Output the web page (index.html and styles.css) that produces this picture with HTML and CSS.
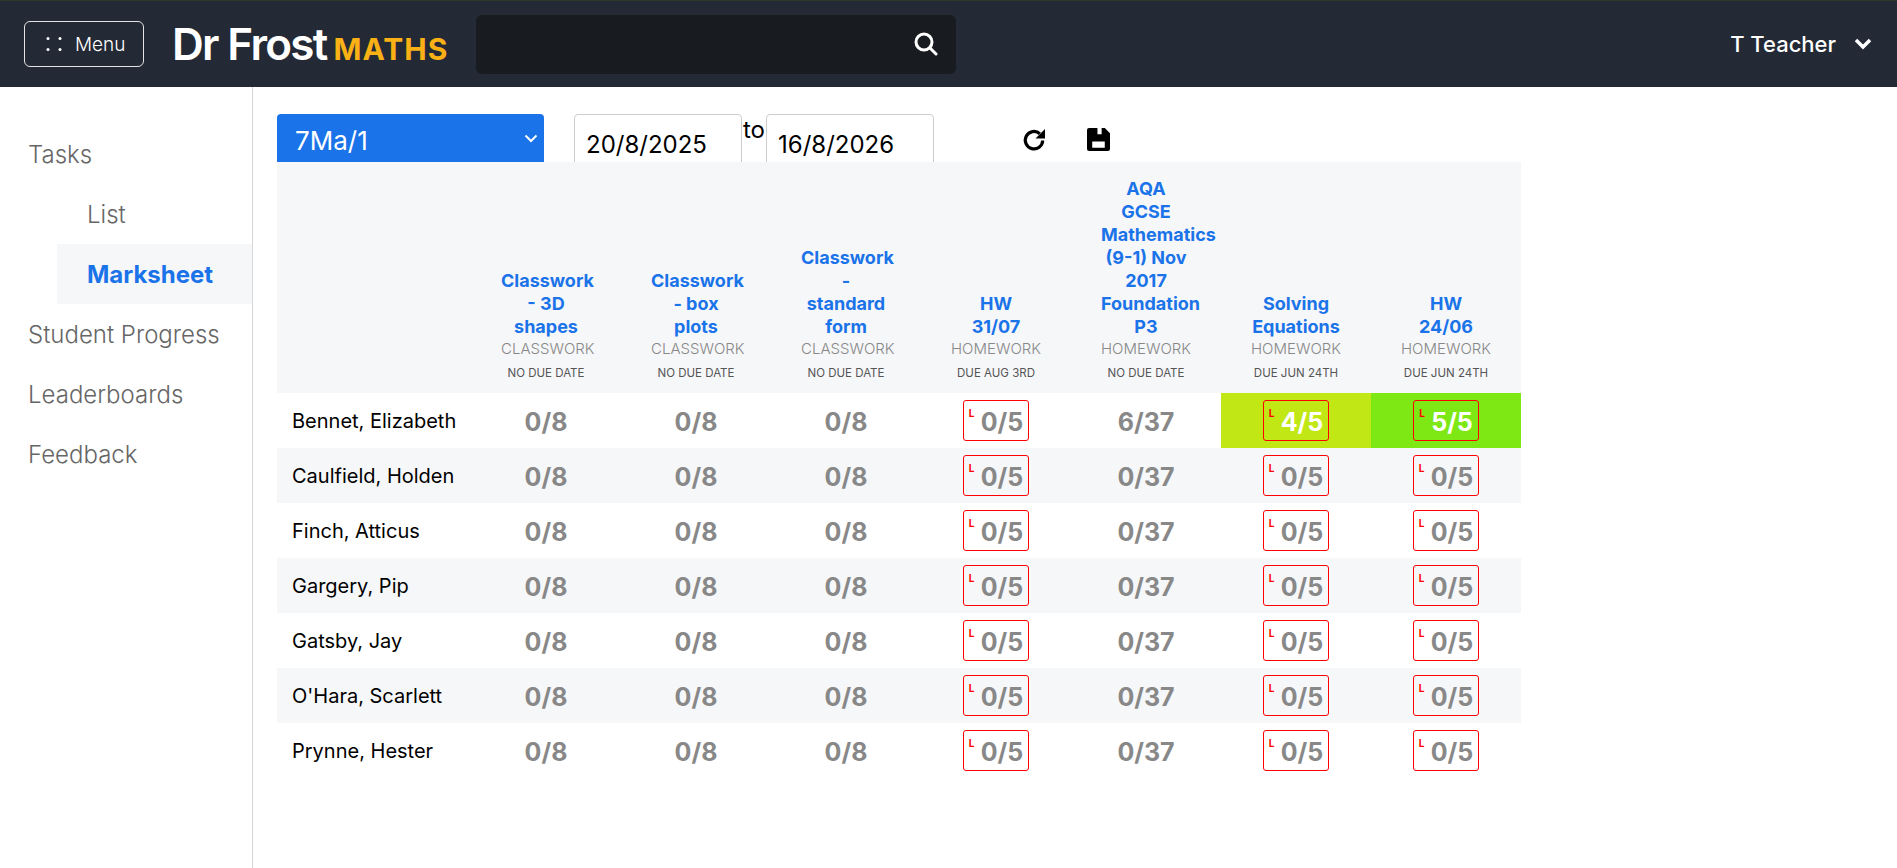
FILE: index.html
```html
<!DOCTYPE html>
<html>

<head>
	<title>Marksheet</title>
	<link rel="stylesheet" href="styles.css">
</head>

<body>
	<header class="topbar">
		<button class="menu-btn">
			<svg width="16" height="14" viewBox="0 0 16 14"><circle cx="2" cy="1.500" r="1.500" fill="#fff"/><circle cx="14" cy="1.500" r="1.500" fill="#fff"/><circle cx="2" cy="12.500" r="1.500" fill="#fff"/><circle cx="14" cy="12.500" r="1.500" fill="#fff"/></svg>
			<span>Menu</span>
		</button>
		<div class="logo"><span class="logo-name">Dr Frost</span><span class="logo-maths">MATHS</span></div>
		<div class="search">
			<svg width="24" height="24" viewBox="0 0 24 24" fill="none" stroke="#fff" stroke-width="3" stroke-linecap="round"><circle cx="10" cy="10" r="8"/><path d="M16 16l6 6"/></svg>
		</div>
		<div class="user">
			<span>T Teacher</span>
			<svg width="18" height="12" viewBox="0 0 18 12" fill="none" stroke="#fff" stroke-width="3.500"><path d="M2 2l7 7 7-7"/></svg>
		</div>
	</header>
	<div class="page">
		<nav class="side">
			<a class="side-item">Tasks</a>
			<a class="side-item sub">List</a>
			<a class="side-item sub active">Marksheet</a>
			<a class="side-item">Student Progress</a>
			<a class="side-item">Leaderboards</a>
			<a class="side-item">Feedback</a>
		</nav>
		<main class="content">
			<div class="filters">
				<div class="class-select">
					<span>7Ma/1</span>
					<svg width="14" height="9" viewBox="0 0 14 9" fill="none" stroke="#fff" stroke-width="2"><path d="M1.500 1.500L7 7l5.500-5.500"/></svg>
				</div>
				<div class="date-box">20/8/2025</div>
				<span class="to">to</span>
				<div class="date-box">16/8/2026</div>
				<svg class="tool refresh" width="24" height="24" viewBox="0 0 24 24" fill="none" stroke="#000" stroke-width="3.200"><path d="M20.700 12.500a8.700 8.700 0 1 1-2.900-6.800"/><path d="M23 1v9.500h-9.500z" fill="#000" stroke="none"/></svg>
				<svg class="tool save" width="23" height="23" viewBox="0 0 22 22"><path fill-rule="evenodd" d="M2 0h15l5 5v15a2 2 0 0 1-2 2H2a2 2 0 0 1-2-2V2a2 2 0 0 1 2-2zM10 0v6h4V0zM5 13v6h12v-6z"/></svg>
			</div>
			<table class="marks" id="marks"></table>
		</main>
	</div>
	<script>
		var tasks = [
			['Classwork<br>- 3D<br>shapes', 'Classwork', 'No due date', 8],
			['Classwork<br>- box<br>plots', 'Classwork', 'No due date', 8],
			['Classwork<br>-<br>standard<br>form', 'Classwork', 'No due date', 8],
			['HW<br>31/07', 'Homework', 'Due Aug 3rd', 5, true],
			['AQA<br>GCSE<br>Mathematics<br>(9-1) Nov<br>2017<br>Foundation<br>P3', 'Homework', 'No due date', 37],
			['Solving<br>Equations', 'Homework', 'Due Jun 24th', 5, true],
			['HW<br>24/06', 'Homework', 'Due Jun 24th', 5, true]
		]
		var students = ['Bennet, Elizabeth', 'Caulfield, Holden', 'Finch, Atticus', 'Gargery, Pip', 'Gatsby, Jay', "O'Hara, Scarlett", 'Prynne, Hester']
		var o = '<thead><tr><th></th>'
		tasks.forEach(function (t) {
			o += '<th><div class="head"><div class="task-name">' + t[0] + '</div><div class="task-type">' + t[1] + '</div><div class="task-due">' + t[2] + '</div></div></th>'
		})
		o += '</tr></thead><tbody>'
		students.forEach(function (s, r) {
			o += '<tr><td class="name">' + s + '</td>'
			tasks.forEach(function (t, c) {
				var got = 0
				var cls = ''
				if (r == 0 && c == 4) got = 6
				if (r == 0 && c == 5) { got = 4; cls = ' lime' }
				if (r == 0 && c == 6) { got = 5; cls = ' green' }
				var score = got + '/' + t[3]
				if (t[4]) score = '<span class="late"><i>L</i>' + score + '</span>'
				o += '<td class="score' + cls + '">' + score + '</td>'
			})
			o += '</tr>'
		})
		document.getElementById('marks').innerHTML = o + '</tbody>'
	</script>
</body>

</html>
```

FILE: styles.css
```css
html,
body {
	margin: 0;
	padding: 0;
	height: 100%;
}

body {
	display: flex;
	flex-direction: column;
	height: 868px;
	overflow: hidden;
	background: #fff;
	font-family: "Inter", "Noto Sans", sans-serif;
}

.topbar {
	display: flex;
	align-items: center;
	flex: 0 0 87px;
	box-sizing: border-box;
	padding: 0 25px 0 24px;
	background: #232a36;
	border-top: 1px solid #2c3a2a;
}

.menu-btn {
	display: flex;
	align-items: center;
	gap: 13px;
	box-sizing: border-box;
	width: 120px;
	height: 46px;
	padding: 0 0 0 21px;
	background: none;
	border: 1px solid #e4e4e4;
	border-radius: 6px;
	color: #fff;
	font-family: inherit;
	font-size: 19px;
	font-weight: 300;
}

.logo {
	display: flex;
	align-items: baseline;
	gap: 7px;
	margin-left: 28px;
	width: 304px;
}

.logo-name {
	color: #fff;
	font-size: 44px;
	font-weight: 600;
	letter-spacing: -1.700px;
}

.logo-maths {
	color: #f9b116;
	font-size: 30px;
	font-weight: 700;
	letter-spacing: 1px;
}

.search {
	display: flex;
	align-items: center;
	justify-content: flex-end;
	box-sizing: border-box;
	width: 480px;
	height: 59px;
	padding-right: 18px;
	background: #181b1f;
	border-radius: 6px;
}

.user {
	display: flex;
	align-items: center;
	gap: 18px;
	margin-left: auto;
	color: #fff;
	font-size: 22px;
	font-weight: 500;
}

.page {
	display: flex;
	flex: 1;
}

.side {
	box-sizing: border-box;
	width: 253px;
	padding-top: 37px;
	border-right: 1px solid #d6d6d6;
}

.side-item {
	display: block;
	height: 60px;
	padding-left: 28px;
	color: #666;
	font-size: 24px;
	font-weight: 300;
	line-height: 62px;
}

.side-item.sub {
	margin-left: 57px;
	padding-left: 30px;
}

.side-item.active {
	background: #f6f7f9;
	color: #1a73e8;
	font-weight: 700;
}

.content {
	padding: 27px 0 0 24px;
}

.filters {
	display: flex;
	height: 48px;
	overflow: hidden;
}

.class-select {
	display: flex;
	align-items: center;
	justify-content: space-between;
	box-sizing: border-box;
	width: 267px;
	height: 48px;
	padding: 5px 6px 0 18px;
	background: #1a73e8;
	border-radius: 4px 4px 0 0;
	color: #fff;
	font-size: 26px;
}

.class-select svg {
	margin-top: -5px;
}

.date-box {
	box-sizing: border-box;
	width: 168px;
	height: 60px;
	padding: 15px 0 0 11px;
	border: 1px solid #ccc;
	border-radius: 4px;
	font-size: 24px;
}

.class-select + .date-box {
	margin-left: 30px;
}

.to {
	width: 24px;
	padding-top: 1px;
	font-size: 24px;
	text-align: center;
}

.tool {
	margin-top: 14px;
}

.refresh {
	margin-left: 88px;
}

.save {
	margin-left: 41px;
}

.marks {
	border-collapse: collapse;
	table-layout: fixed;
	width: 1244px;
}

.marks th {
	width: 150px;
	padding: 0;
	background: #f6f7f9;
	vertical-align: bottom;
	font-weight: normal;
}

.marks th:first-child {
	width: 194px;
}

.head {
	width: 90px;
	margin: 0 auto;
	padding: 15px 0 12px;
}

.task-name {
	color: #1a73e8;
	font-size: 18px;
	font-weight: 700;
	line-height: 23px;
	white-space: nowrap;
}

.task-type {
	margin-top: 1px;
	color: #888;
	font-size: 15px;
	font-weight: 300;
	line-height: 20px;
	text-transform: uppercase;
}

.task-due {
	margin-top: 6px;
	color: #555;
	font-size: 11.500px;
	line-height: 16px;
	text-transform: uppercase;
	white-space: nowrap;
}

.marks tbody tr {
	height: 55px;
}

.marks tbody tr:nth-child(even) {
	background: #f6f7f9;
}

.name {
	padding-left: 15px;
	font-size: 20px;
}

.score {
	padding: 2px 0 0;
	color: #888;
	font-size: 25px;
	font-weight: 700;
	text-align: center;
}

.late {
	position: relative;
	display: inline-block;
	box-sizing: border-box;
	height: 41px;
	margin-top: -2px;
	padding: 0 5px 0 17px;
	border: 1px solid #f00;
	border-radius: 3px;
	line-height: 43px;
}

.late i {
	position: absolute;
	top: 7px;
	left: 5px;
	color: #f00;
	font-size: 10px;
	font-style: normal;
	line-height: 10px;
}

.lime {
	background: #c1e714;
	color: #fff;
}

.green {
	background: #7ee814;
	color: #fff;
}
```
